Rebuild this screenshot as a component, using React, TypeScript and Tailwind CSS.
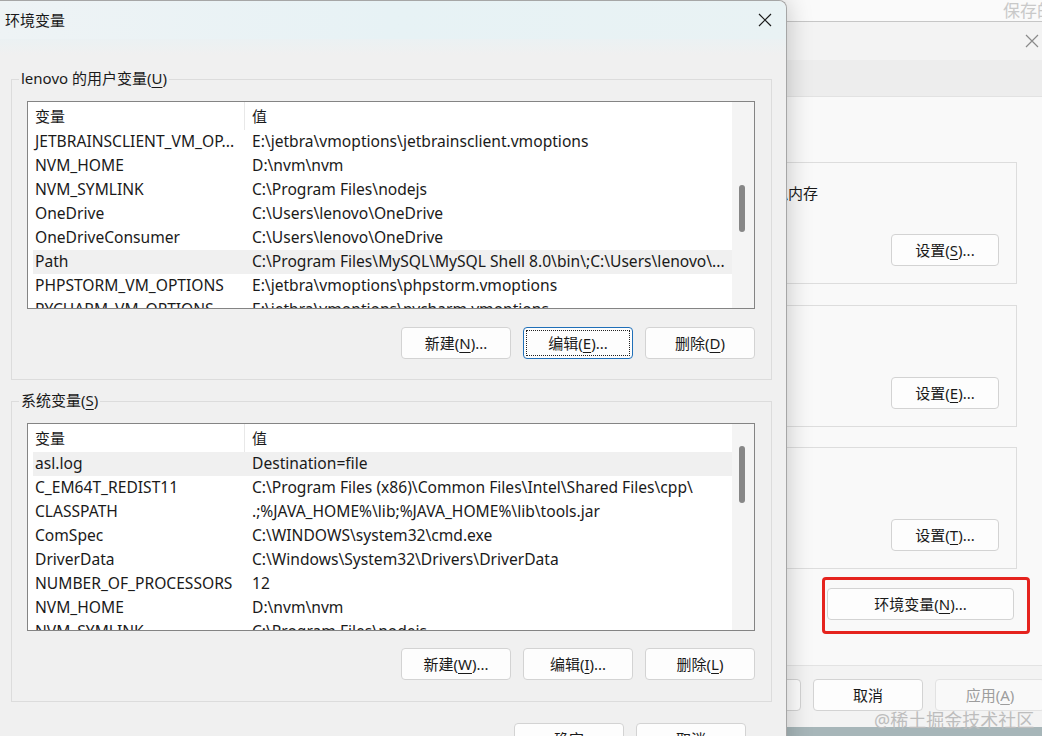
import React from 'react';

type Row = [string, string];

const userRows: Row[] = [
  ['JETBRAINSCLIENT_VM_OP...', 'E:\\jetbra\\vmoptions\\jetbrainsclient.vmoptions'],
  ['NVM_HOME', 'D:\\nvm\\nvm'],
  ['NVM_SYMLINK', 'C:\\Program Files\\nodejs'],
  ['OneDrive', 'C:\\Users\\lenovo\\OneDrive'],
  ['OneDriveConsumer', 'C:\\Users\\lenovo\\OneDrive'],
  ['Path', 'C:\\Program Files\\MySQL\\MySQL Shell 8.0\\bin\\;C:\\Users\\lenovo\\...'],
  ['PHPSTORM_VM_OPTIONS', 'E:\\jetbra\\vmoptions\\phpstorm.vmoptions'],
  ['PYCHARM_VM_OPTIONS', 'E:\\jetbra\\vmoptions\\pycharm.vmoptions'],
];

const systemRows: Row[] = [
  ['asl.log', 'Destination=file'],
  ['C_EM64T_REDIST11', 'C:\\Program Files (x86)\\Common Files\\Intel\\Shared Files\\cpp\\'],
  ['CLASSPATH', '.;%JAVA_HOME%\\lib;%JAVA_HOME%\\lib\\tools.jar'],
  ['ComSpec', 'C:\\WINDOWS\\system32\\cmd.exe'],
  ['DriverData', 'C:\\Windows\\System32\\Drivers\\DriverData'],
  ['NUMBER_OF_PROCESSORS', '12'],
  ['NVM_HOME', 'D:\\nvm\\nvm'],
  ['NVM_SYMLINK', 'C:\\Program Files\\nodejs'],
];

const Key: React.FC<{ children: React.ReactNode }> = ({ children }) => (
  <span className="underline decoration-1 underline-offset-[3px]">{children}</span>
);

const CloseIcon: React.FC<{ className?: string }> = ({ className }) => (
  <svg width="14" height="14" viewBox="0 0 14 14" className={className}>
    <path d="M1 1L13 13M13 1L1 13" stroke="currentColor" strokeWidth="1.2" fill="none" />
  </svg>
);

const WinButton: React.FC<{
  children: React.ReactNode;
  focused?: boolean;
  disabled?: boolean;
  className?: string;
}> = ({ children, focused, disabled, className = 'w-[110px]' }) => (
  <div
    className={`relative h-[32px] shrink-0 flex items-center justify-center rounded-[4px] border text-[15px] ${className} ${
      focused
        ? 'border-[#1f6fb8] bg-[#fdfdfd] text-[#1a1a1a]'
        : disabled
        ? 'border-[#e2e2e2] bg-[#f9f9f9] text-[#9d9d9d]'
        : 'border-[#d3d3d3] bg-[#fdfdfd] text-[#1a1a1a]'
    }`}
  >
    {focused && <div className="absolute inset-[2px] border border-dotted border-[#222]" />}
    {children}
  </div>
);

const VarList: React.FC<{ rows: Row[]; highlight: number; thumbTop: number; thumbHeight: number }> = ({
  rows,
  highlight,
  thumbTop,
  thumbHeight,
}) => (
  <div className="w-[728px] h-[208px] border border-[#848484] bg-white flex overflow-hidden text-[15.6px]">
    <div className="flex-1 flex flex-col overflow-hidden">
      <div className="h-[28px] shrink-0 flex items-center ml-[5px] text-[15px]">
        <div className="w-[212px] h-full flex items-center pl-[2px] border-r border-[#e8e8e8]">变量</div>
        <div className="pl-[7px]">值</div>
      </div>
      {rows.map(([name, value], i) => (
        <div
          key={name + i}
          className={`h-[24px] shrink-0 flex items-center ml-[5px] whitespace-nowrap ${
            i === highlight ? 'bg-[#f0f0f0]' : ''
          }`}
        >
          <div className="w-[212px] pl-[2px] overflow-hidden">{name}</div>
          <div className="pl-[7px]">{value}</div>
        </div>
      ))}
    </div>
    <div className="relative w-[22px] shrink-0 bg-[#f4f4f4]">
      <div
        className="absolute left-[7px] w-[6px] rounded-full bg-[#878787]"
        style={{ top: thumbTop, height: thumbHeight }}
      />
    </div>
  </div>
);

const GroupBox: React.FC<{ label: React.ReactNode; children: React.ReactNode; className?: string }> = ({
  label,
  children,
  className = '',
}) => (
  <div className={`relative ml-[11px] w-[761px] h-[301px] border border-[#dcdcdc] pt-[21px] pl-[15px] ${className}`}>
    <div className="absolute -top-[13px] left-[7px] bg-[#f0f0f0] px-[2px] text-[15px] leading-[22px]">{label}</div>
    {children}
  </div>
);

const EnvDialog: React.FC = () => (
  <div className="absolute left-0 top-0 w-[787px] h-[760px] bg-[#f0f0f0] border-t border-r border-[#a6a6a6] rounded-tr-[8px] shadow-[0_0_26px_rgba(0,0,0,0.22)] flex flex-col text-[15px] text-[#1a1a1a]">
    <div className="h-[38px] shrink-0 flex items-center justify-between pl-[5px] pr-[14px] rounded-tr-[8px] bg-gradient-to-r from-[#eef3f5] via-[#e7f2f5] to-[#e9f2f4]">
      <span className="text-[15px]">环境变量</span>
      <CloseIcon className="text-[#1a1a1a]" />
    </div>
    <div className="h-[40px] shrink-0 bg-gradient-to-b from-[#ebf1f3] to-[#f0f0f0] to-40%" />

    <GroupBox
      label={
        <>
          lenovo 的用户变量(<Key>U</Key>)
        </>
      }
    >
      <VarList rows={userRows} highlight={5} thumbTop={83} thumbHeight={47} />
      <div className="w-[728px] mt-[18px] flex justify-end gap-[12px]">
        <WinButton>
          新建(<Key>N</Key>)...
        </WinButton>
        <WinButton focused>
          编辑(<Key>E</Key>)...
        </WinButton>
        <WinButton>
          删除(<Key>D</Key>)
        </WinButton>
      </div>
    </GroupBox>

    <GroupBox
      className="mt-[21px]"
      label={
        <>
          系统变量(<Key>S</Key>)
        </>
      }
    >
      <VarList rows={systemRows} highlight={0} thumbTop={22} thumbHeight={57} />
      <div className="w-[728px] mt-[17px] flex justify-end gap-[12px]">
        <WinButton>
          新建(<Key>W</Key>)...
        </WinButton>
        <WinButton>
          编辑(<Key>I</Key>)...
        </WinButton>
        <WinButton>
          删除(<Key>L</Key>)
        </WinButton>
      </div>
    </GroupBox>

    <div className="mt-[21px] pr-[40px] flex justify-end gap-[12px]">
      <WinButton>确定</WinButton>
      <WinButton>取消</WinButton>
    </div>
  </div>
);

const SettingsGroup: React.FC<{ children?: React.ReactNode; button: React.ReactNode; className?: string }> = ({
  children,
  button,
  className = '',
}) => (
  <div
    className={`ml-[20px] mr-[43px] h-[122px] shrink-0 border border-[#dddddd] flex flex-col items-end justify-between pt-[19px] pb-[17px] pr-[17px] ${className}`}
  >
    <div className="w-full h-[22px] pr-[181px] flex justify-end whitespace-nowrap overflow-hidden">
      <span className="shrink-0">{children}</span>
    </div>
    <WinButton className="w-[108px]">{button}</WinButton>
  </div>
);

const SystemDialog: React.FC = () => (
  <div className="absolute left-[700px] top-0 w-[360px] h-[727px] flex flex-col text-[15px] text-[#1a1a1a]">
    <div className="h-[22px] shrink-0 bg-[#fafafa] border-b border-[#c6c6c6] flex justify-end overflow-hidden">
      <span className="text-[17px] leading-[26px] -mt-[2px] mr-[-2px] text-[#c9c9c9] whitespace-nowrap w-[59px]">保存的</span>
    </div>
    <div className="h-[38px] shrink-0 bg-[#f3f3f3] flex items-center justify-end pr-[21px]">
      <CloseIcon className="text-[#8a8a8a]" />
    </div>
    <div className="h-[37px] shrink-0 bg-[#ededed] border-b border-[#e2e2e2]" />
    <div className="flex-1 bg-[#f9f9f9] flex flex-col pt-[65px]">
      <SettingsGroup
        button={
          <>
            设置(<Key>S</Key>)...
          </>
        }
      >
        视觉效果，处理器计划，内存使用，以及虚拟内存
      </SettingsGroup>
      <SettingsGroup
        className="mt-[21px]"
        button={
          <>
            设置(<Key>E</Key>)...
          </>
        }
      />
      <SettingsGroup
        className="mt-[20px]"
        button={
          <>
            设置(<Key>T</Key>)...
          </>
        }
      />
      <div className="self-end mr-[46px] mt-[19px]">
        <WinButton className="w-[187px]">
          环境变量(<Key>N</Key>)...
        </WinButton>
      </div>
    </div>
    <div className="h-[62px] shrink-0 bg-[#f3f3f3] border-t border-[#e3e3e3] flex justify-end gap-[12px] pt-[13px] pr-[15px]">
      <WinButton>确定</WinButton>
      <WinButton>取消</WinButton>
      <WinButton disabled>
        应用(<Key>A</Key>)
      </WinButton>
    </div>
  </div>
);

export default function App() {
  return (
    <div className="relative w-[1042px] h-[736px] overflow-hidden bg-[#a7b6b9] font-['Noto_Sans','Noto_Sans_CJK_SC',sans-serif]">
      <SystemDialog />
      <div className="absolute left-[822px] top-[577px] w-[208px] h-[57px] border-[3px] border-[#e5231e] rounded-[4px]" />
      <EnvDialog />
      <div className="absolute left-[874px] top-[707px] text-[18px] text-[#bdbdbd] whitespace-nowrap">@稀土掘金技术社区</div>
    </div>
  );
}
